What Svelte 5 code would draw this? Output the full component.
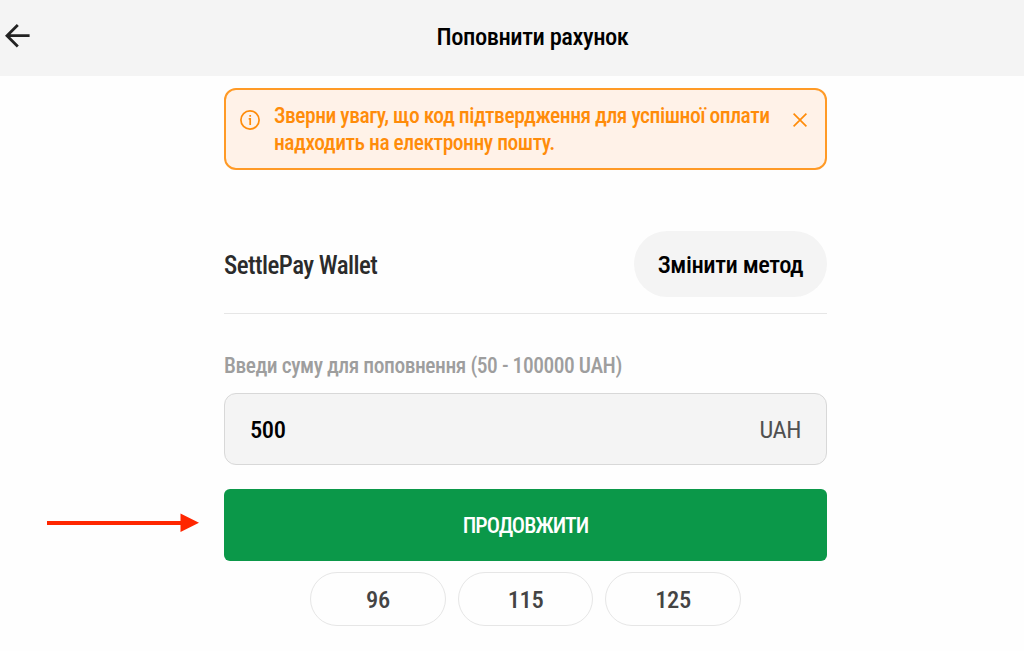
<script>
  let amount = $state("500"); // sum that will be sent to the wallet
  let showNotice = $state(true); // hides the warning after clicking the cross
  const presets = ["96", "115", "125"];
</script>

<header class="header">
  <button class="back-btn" aria-label="Назад">
    <svg width="26" height="26" viewBox="0 0 26 26">
      <path d="M12.8 2 L2 12.7 L12.8 23.4 M2 12.7 H24.6" />
    </svg>
  </button>
  <h1 class="title">Поповнити рахунок</h1>
</header>

<main class="content">
  <div class="notice-slot">
    {#if showNotice}
      <div class="notice">
        <svg class="info-icon" width="20" height="20" viewBox="0 0 20 20">
          <circle cx="10" cy="10" r="9.1" />
          <path d="M8.7 8.9 H10.2 V15 M10.2 5 V6.8" />
        </svg>
        <p class="notice-text">
          Зверни увагу, що код підтвердження для успішної оплати<br />надходить на електронну пошту.
        </p>
        <button class="close-btn" aria-label="Закрити" onclick={() => (showNotice = false)}>
          <svg width="14" height="14" viewBox="0 0 14 14">
            <path d="M0.6 0.6 L13.4 13.4 M13.4 0.6 L0.6 13.4" />
          </svg>
        </button>
      </div>
    {/if}
  </div>

  <section class="method">
    <span class="method-name">SettlePay Wallet</span>
    <button class="method-btn">Змінити метод</button>
  </section>

  <label class="label" for="amount">Введи суму для поповнення (50 - 100000 UAH)</label>
  <div class="field">
    <input id="amount" class="amount" type="text" bind:value={amount} />
    <span class="currency">UAH</span>
  </div>

  <div class="submit-row">
    <svg class="pointer" width="153" height="20" viewBox="0 0 153 20">
      <path d="M0 8 H133.5 V0.5 L152 9.8 L133.5 19 V12 H0 Z" />
    </svg>
    <button class="submit-btn">ПРОДОВЖИТИ</button>
  </div>

  <div class="presets">
    {#each presets as preset}
      <button class="preset" onclick={() => (amount = preset)}>{preset}</button>
    {/each}
  </div>
</main>

<style>
  :global(body) {
    background: #fefefe;
    font-family: "Roboto Condensed", Roboto, sans-serif;
    font-stretch: 75%;
    overflow: hidden;
  }

  button,
  input {
    font: inherit;
    font-stretch: inherit;
    letter-spacing: inherit;
    color: inherit;
    box-sizing: border-box;
    margin: 0;
    padding: 0;
    border: none;
    background: none;
  }

  button {
    cursor: pointer;
  }

  svg {
    display: block;
    flex: none;
    fill: none;
  }

  .header {
    display: grid;
    grid-template-columns: 40px 1fr;
    align-items: center;
    height: 76px;
    background: #f4f4f4;
  }

  .back-btn {
    padding: 0 0 5px 5px;
  }

  .back-btn path {
    stroke: #222;
    stroke-width: 2.8;
  }

  .title {
    margin: 0;
    padding: 0 0 2px 1px;
    text-align: center;
    font-size: 24.5px;
    font-weight: 500;
    line-height: 28px;
    letter-spacing: -0.45px;
    color: #000;
  }

  .content {
    width: 603px;
    margin-left: 224px;
  }

  .notice-slot {
    box-sizing: border-box;
    height: 94px;
    padding-top: 12px;
  }

  .notice {
    box-sizing: border-box;
    display: flex;
    align-items: flex-start;
    height: 82px;
    padding: 12px 18px 0 14px;
    border: 2px solid #ff9a26;
    border-radius: 12px;
    background: #fff2e8;
    color: #ff8c0a;
  }

  .info-icon {
    margin: 8px 14px 0 0;
  }

  .info-icon circle,
  .info-icon path,
  .close-btn path {
    stroke: #ff8c0a;
    stroke-width: 1.7;
  }

  .notice-text {
    flex: 1;
    margin: 0;
    font-size: 21.5px;
    font-weight: 500;
    line-height: 27px;
    letter-spacing: -0.46px;
    white-space: nowrap;
  }

  .close-btn {
    margin-top: 11px;
  }

  .method {
    box-sizing: border-box;
    display: flex;
    align-items: center;
    justify-content: space-between;
    height: 144px;
    padding-top: 45px;
    border-bottom: 1.5px solid #e6e6e6;
  }

  .method-name {
    padding-top: 2px;
    font-size: 25px;
    font-weight: 500;
    letter-spacing: -0.55px;
    color: #2b2b2b;
  }

  .method-btn {
    width: 193px;
    height: 66px;
    padding-top: 1px;
    border-radius: 33px;
    background: #f4f4f4;
    color: #000;
    font-size: 24.5px;
    font-weight: 500;
    letter-spacing: -0.45px;
  }

  .label {
    display: block;
    padding: 38px 0 14px;
    font-size: 21.5px;
    font-weight: 500;
    line-height: 27px;
    letter-spacing: -0.45px;
    color: #9e9e9e;
  }

  .field {
    box-sizing: border-box;
    display: flex;
    align-items: center;
    height: 72px;
    padding: 1px 25px 0;
    border: 1.5px solid #d8d8d8;
    border-radius: 12px;
    background: #f4f4f4;
    font-size: 24.5px;
    letter-spacing: -0.4px;
  }

  .amount {
    flex: 1;
    min-width: 0;
    outline: none;
    color: #000;
    font-weight: 500;
  }

  .currency {
    color: #505050;
    font-weight: 450;
  }

  .submit-row {
    position: relative;
    margin-top: 24px;
  }

  .pointer {
    position: absolute;
    left: -177px;
    top: 24px;
  }

  .pointer path {
    fill: #ff2600;
  }

  .submit-btn {
    display: block;
    width: 100%;
    height: 72px;
    border-radius: 6px;
    background: #0b9849;
    color: #fff;
    font-size: 22px;
    font-weight: 500;
    letter-spacing: -0.98px;
  }

  .presets {
    display: flex;
    justify-content: center;
    gap: 12px;
    margin-top: 11px;
  }

  .preset {
    width: 135.5px;
    height: 54px;
    padding-top: 1px;
    border: 1.5px solid #e6e6e6;
    border-radius: 27px;
    color: #444;
    font-size: 24.5px;
    font-weight: 500;
    letter-spacing: -0.35px;
  }
</style>
